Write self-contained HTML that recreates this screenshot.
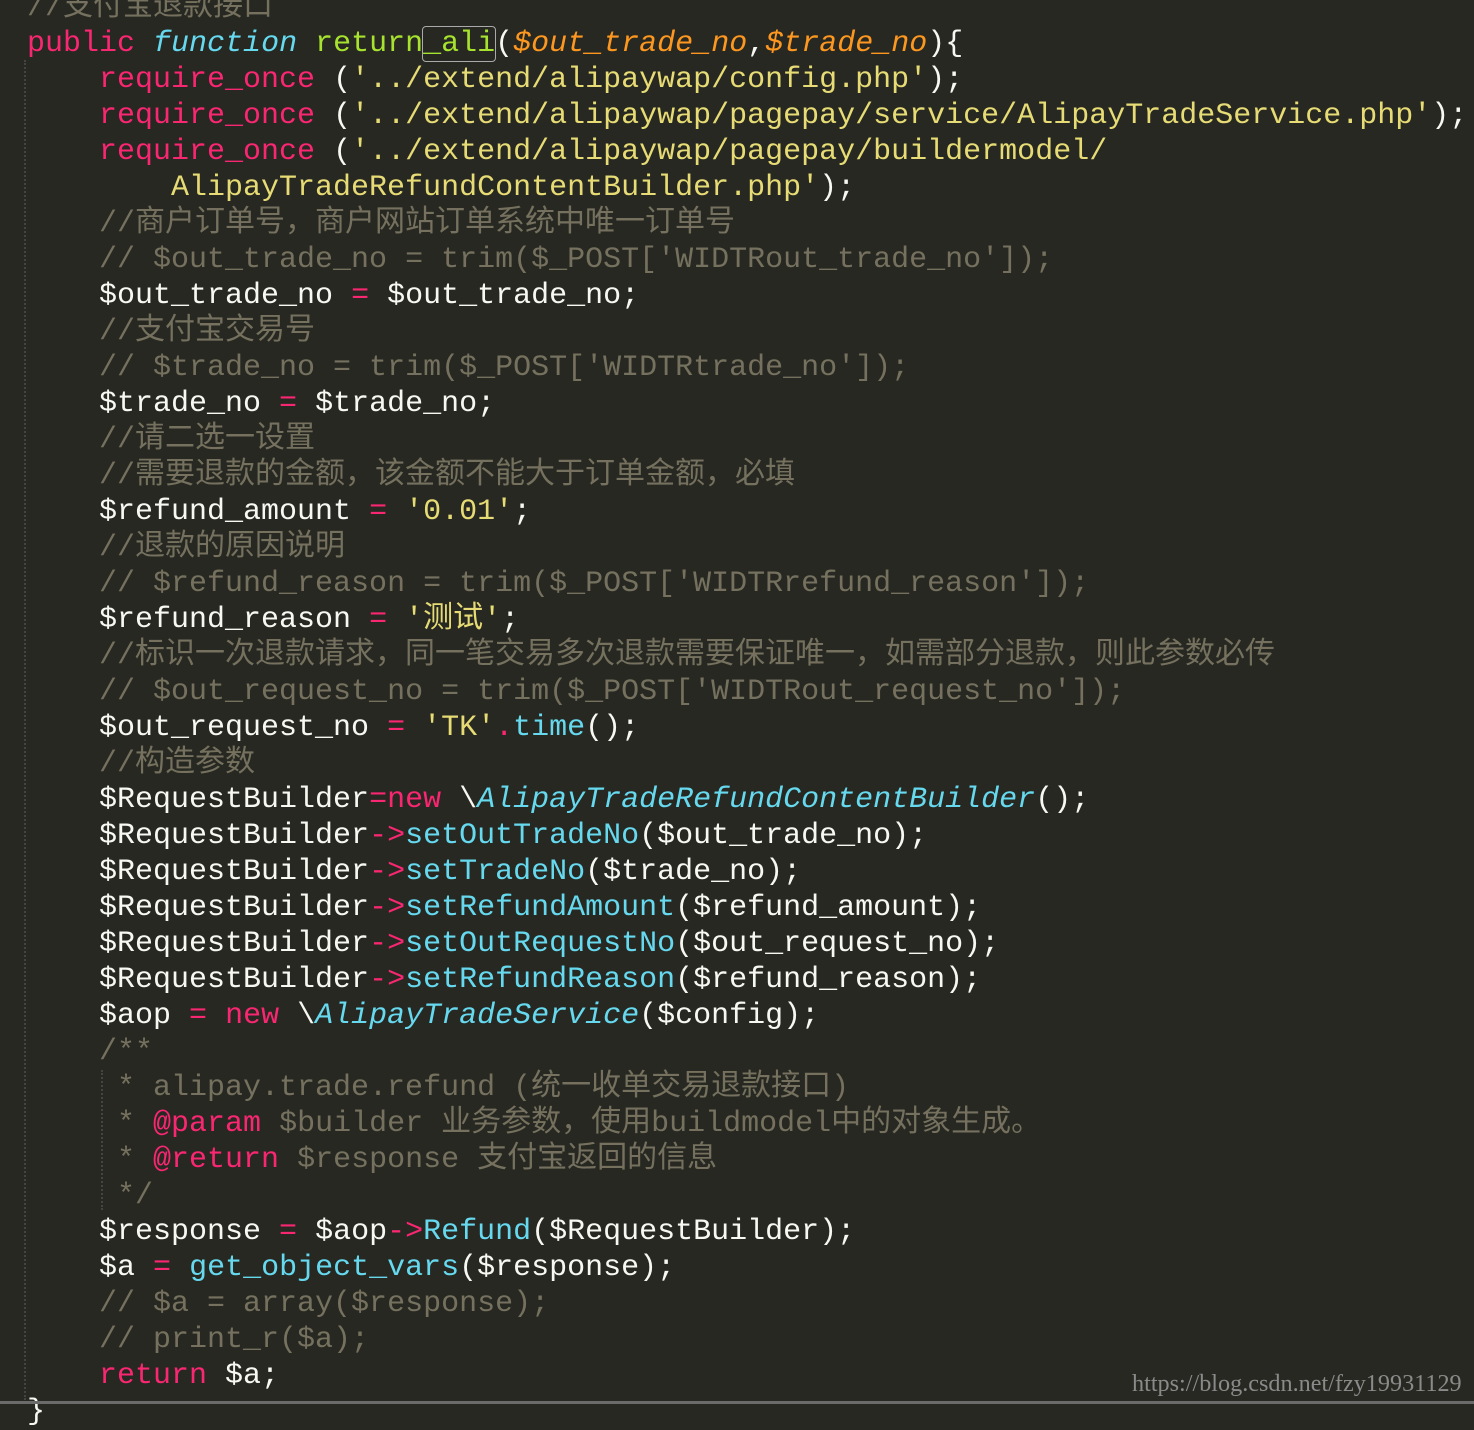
<!DOCTYPE html>
<html><head><meta charset="utf-8">
<style>
html,body{margin:0;padding:0;}
body{width:1474px;height:1404px;background:#272822;overflow:hidden;position:relative;}
.code{position:absolute;left:27px;top:-10px;margin:0;font-family:"Liberation Mono","Noto Sans CJK SC",monospace;font-size:30px;color:#f8f8f2;}
.code div{height:36px;line-height:36px;white-space:pre;overflow:visible;}
.k{color:#f92672}.f{color:#66d9ef;font-style:italic}.g{color:#a6e22e}.p{color:#fd971f;font-style:italic}
.s{color:#e6db74}.c{color:#75715e}.m{color:#66d9ef}.i{color:#66d9ef;font-style:italic}
.z{font-family:"Noto Sans CJK SC",sans-serif;font-size:30px;line-height:0;}
.box{outline:1.5px solid #aaa;border-radius:3px}
.guide{position:absolute;left:24px;top:60px;height:1340px;border-left:2px dotted #444;}
.guide2{position:absolute;left:101px;top:1070px;height:140px;border-left:2px dotted #444;}
.wm{position:absolute;left:1132px;top:1370px;font-family:"Liberation Serif",serif;font-size:24.2px;color:#8a8a8a;line-height:28px;}
.bar{position:absolute;left:0;top:1401px;width:1474px;height:3px;background:#6b6b6b;}
</style></head><body>
<div class="guide"></div><div class="guide2"></div>
<div class="code">
<div><span class="c">//<span class="z">支付宝退款接口</span></span></div>
<div><span class="k">public</span> <span class="f">function</span> <span class="g">return<span class="box">_ali</span></span>(<span class="p">$out_trade_no</span>,<span class="p">$trade_no</span>){</div>
<div>    <span class="k">require_once</span> (<span class="s">'../extend/alipaywap/config.php'</span>);</div>
<div>    <span class="k">require_once</span> (<span class="s">'../extend/alipaywap/pagepay/service/AlipayTradeService.php'</span>);</div>
<div>    <span class="k">require_once</span> (<span class="s">'../extend/alipaywap/pagepay/buildermodel/</span></div>
<div><span class="s">        AlipayTradeRefundContentBuilder.php'</span>);</div>
<div>    <span class="c">//<span class="z">商户订单号，商户网站订单系统中唯一订单号</span></span></div>
<div>    <span class="c">// $out_trade_no = trim($_POST['WIDTRout_trade_no']);</span></div>
<div>    $out_trade_no <span class="k">=</span> $out_trade_no;</div>
<div>    <span class="c">//<span class="z">支付宝交易号</span></span></div>
<div>    <span class="c">// $trade_no = trim($_POST['WIDTRtrade_no']);</span></div>
<div>    $trade_no <span class="k">=</span> $trade_no;</div>
<div>    <span class="c">//<span class="z">请二选一设置</span></span></div>
<div>    <span class="c">//<span class="z">需要退款的金额，该金额不能大于订单金额，必填</span></span></div>
<div>    $refund_amount <span class="k">=</span> <span class="s">'0.01'</span>;</div>
<div>    <span class="c">//<span class="z">退款的原因说明</span></span></div>
<div>    <span class="c">// $refund_reason = trim($_POST['WIDTRrefund_reason']);</span></div>
<div>    $refund_reason <span class="k">=</span> <span class="s">'<span class="z">测试</span>'</span>;</div>
<div>    <span class="c">//<span class="z">标识一次退款请求，同一笔交易多次退款需要保证唯一，如需部分退款，则此参数必传</span></span></div>
<div>    <span class="c">// $out_request_no = trim($_POST['WIDTRout_request_no']);</span></div>
<div>    $out_request_no <span class="k">=</span> <span class="s">'TK'</span><span class="k">.</span><span class="m">time</span>();</div>
<div>    <span class="c">//<span class="z">构造参数</span></span></div>
<div>    $RequestBuilder<span class="k">=new</span> \<span class="i">AlipayTradeRefundContentBuilder</span>();</div>
<div>    $RequestBuilder<span class="k">-&gt;</span><span class="m">setOutTradeNo</span>($out_trade_no);</div>
<div>    $RequestBuilder<span class="k">-&gt;</span><span class="m">setTradeNo</span>($trade_no);</div>
<div>    $RequestBuilder<span class="k">-&gt;</span><span class="m">setRefundAmount</span>($refund_amount);</div>
<div>    $RequestBuilder<span class="k">-&gt;</span><span class="m">setOutRequestNo</span>($out_request_no);</div>
<div>    $RequestBuilder<span class="k">-&gt;</span><span class="m">setRefundReason</span>($refund_reason);</div>
<div>    $aop <span class="k">=</span> <span class="k">new</span> \<span class="i">AlipayTradeService</span>($config);</div>
<div>    <span class="c">/**</span></div>
<div><span class="c">     * alipay.trade.refund (<span class="z">统一收单交易退款接口</span>)</span></div>
<div><span class="c">     * </span><span class="k">@param</span><span class="c"> $builder <span class="z">业务参数，使用</span>buildmodel<span class="z">中的对象生成。</span></span></div>
<div><span class="c">     * </span><span class="k">@return</span><span class="c"> $response <span class="z">支付宝返回的信息</span></span></div>
<div><span class="c">     */</span></div>
<div>    $response <span class="k">=</span> $aop<span class="k">-&gt;</span><span class="m">Refund</span>($RequestBuilder);</div>
<div>    $a <span class="k">=</span> <span class="m">get_object_vars</span>($response);</div>
<div>    <span class="c">// $a = array($response);</span></div>
<div>    <span class="c">// print_r($a);</span></div>
<div>    <span class="k">return</span> $a;</div>
<div>}</div>
</div>
<div class="wm">https://blog.csdn.net/fzy19931129</div>
<div class="bar"></div>
</body></html>
